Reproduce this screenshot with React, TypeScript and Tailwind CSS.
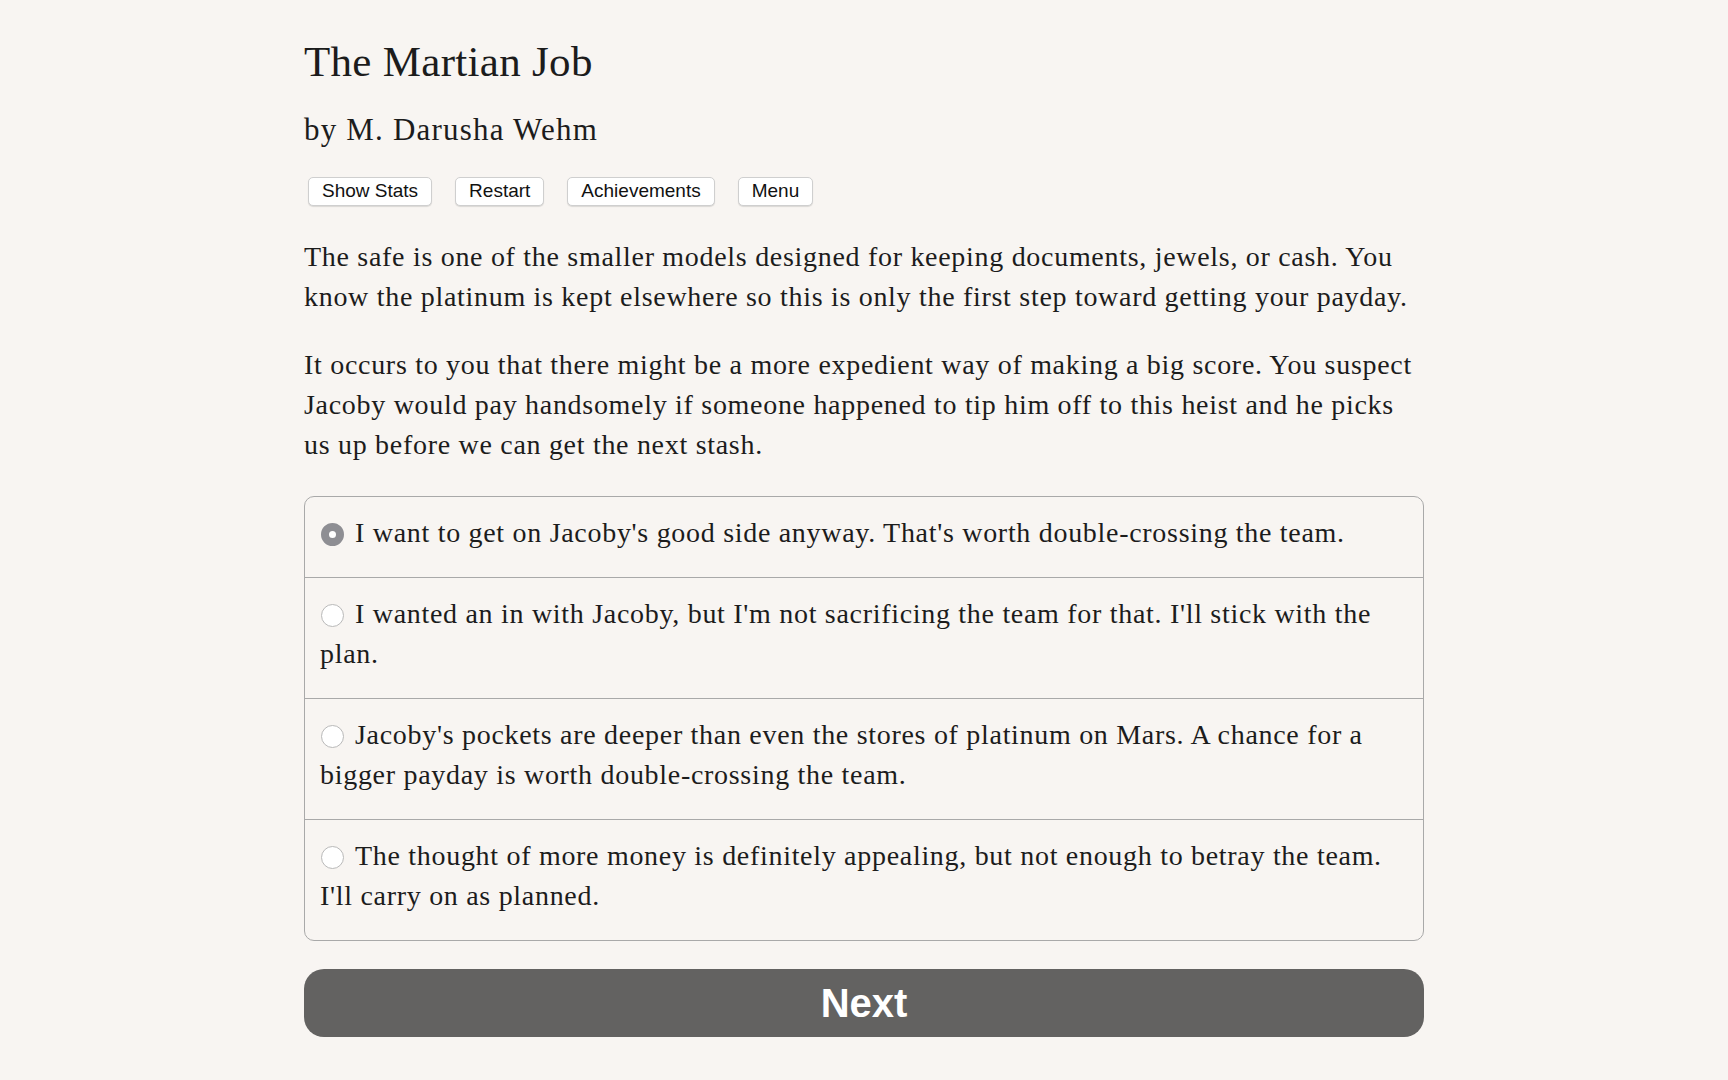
import React from "react";

const serif = { fontFamily: '"Liberation Serif", "Times New Roman", serif' };

function Radio({ checked }: { checked?: boolean }) {
  return checked ? (
    <span className="inline-block w-[23px] h-[23px] rounded-full bg-white border-[8px] border-[#8e8e93] align-[-4px] ml-[1px] mr-[11px]" />
  ) : (
    <span className="inline-block w-[23px] h-[23px] rounded-full bg-white border border-[#b9b9b9] align-[-4px] ml-[1px] mr-[11px]" />
  );
}

function Btn({ children }: { children: React.ReactNode }) {
  return (
    <button
      className="h-[29px] px-[13px] flex items-center bg-white border border-[#cfcfcf] rounded-[5px] shadow-[0_1px_1px_rgba(0,0,0,0.12)] text-[19px] text-[#111]"
      style={{ fontFamily: '"Liberation Sans", Arial, sans-serif' }}
    >
      {children}
    </button>
  );
}

const options: { text: React.ReactNode; checked?: boolean }[] = [
  { text: <>I want to get on Jacoby's good side anyway. That's worth double-crossing the team.</>, checked: true },
  { text: <>I wanted an in with Jacoby, but I'm not sacrificing the team for that. I'll stick with the<br />plan.</> },
  { text: <>Jacoby's pockets are deeper than even the stores of platinum on Mars. A chance for a<br />bigger payday is worth double-crossing the team.</> },
  { text: <>The thought of more money is definitely appealing, but not enough to betray the team.<br />I'll carry on as planned.</> },
];

export default function App() {
  return (
    <div className="min-h-[1080px] w-full bg-[#f8f5f2] text-[#1c1c1c]" style={serif}>
      <div className="w-[1120px] mx-auto pt-[36px]">
        <h1 className="text-[43px] leading-[52px] tracking-[0.3px]">The Martian Job</h1>
        <h2 className="mt-[22px] text-[31px] leading-[40px] tracking-[1.2px]">by M. Darusha Wehm</h2>
        <div className="mt-[27px] ml-[4px] flex gap-[23px]">
          <Btn>Show Stats</Btn>
          <Btn>Restart</Btn>
          <Btn>Achievements</Btn>
          <Btn>Menu</Btn>
        </div>
        <div className="text-[28px] leading-[40px] tracking-[0.7px]">
          <p className="mt-[31px]">
            The safe is one of the smaller models designed for keeping documents, jewels, or cash. You
            <br />
            know the platinum is kept elsewhere so this is only the first step toward getting your payday.
          </p>
          <p className="mt-[28px]">
            It occurs to you that there might be a more expedient way of making a big score. You suspect
            <br />
            Jacoby would pay handsomely if someone happened to tip him off to this heist and he picks
            <br />
            us up before we can get the next stash.
          </p>
          <div className="mt-[31px] border border-[#a9a9a9] rounded-[10px]">
            {options.map((o, i) => (
              <div
                key={i}
                className={`pl-[15px] pr-[10px] pt-[16px] pb-[24px] whitespace-nowrap ${i > 0 ? "border-t border-[#a9a9a9]" : ""}`}
              >
                <Radio checked={o.checked} />
                {o.text}
              </div>
            ))}
          </div>
        </div>
        <button
          className="mt-[28px] w-full h-[68px] rounded-[20px] bg-[#636261] text-white text-[40px] font-bold flex items-center justify-center"
          style={{ fontFamily: '"Liberation Sans", Arial, sans-serif' }}
        >
          Next
        </button>
      </div>
    </div>
  );
}
